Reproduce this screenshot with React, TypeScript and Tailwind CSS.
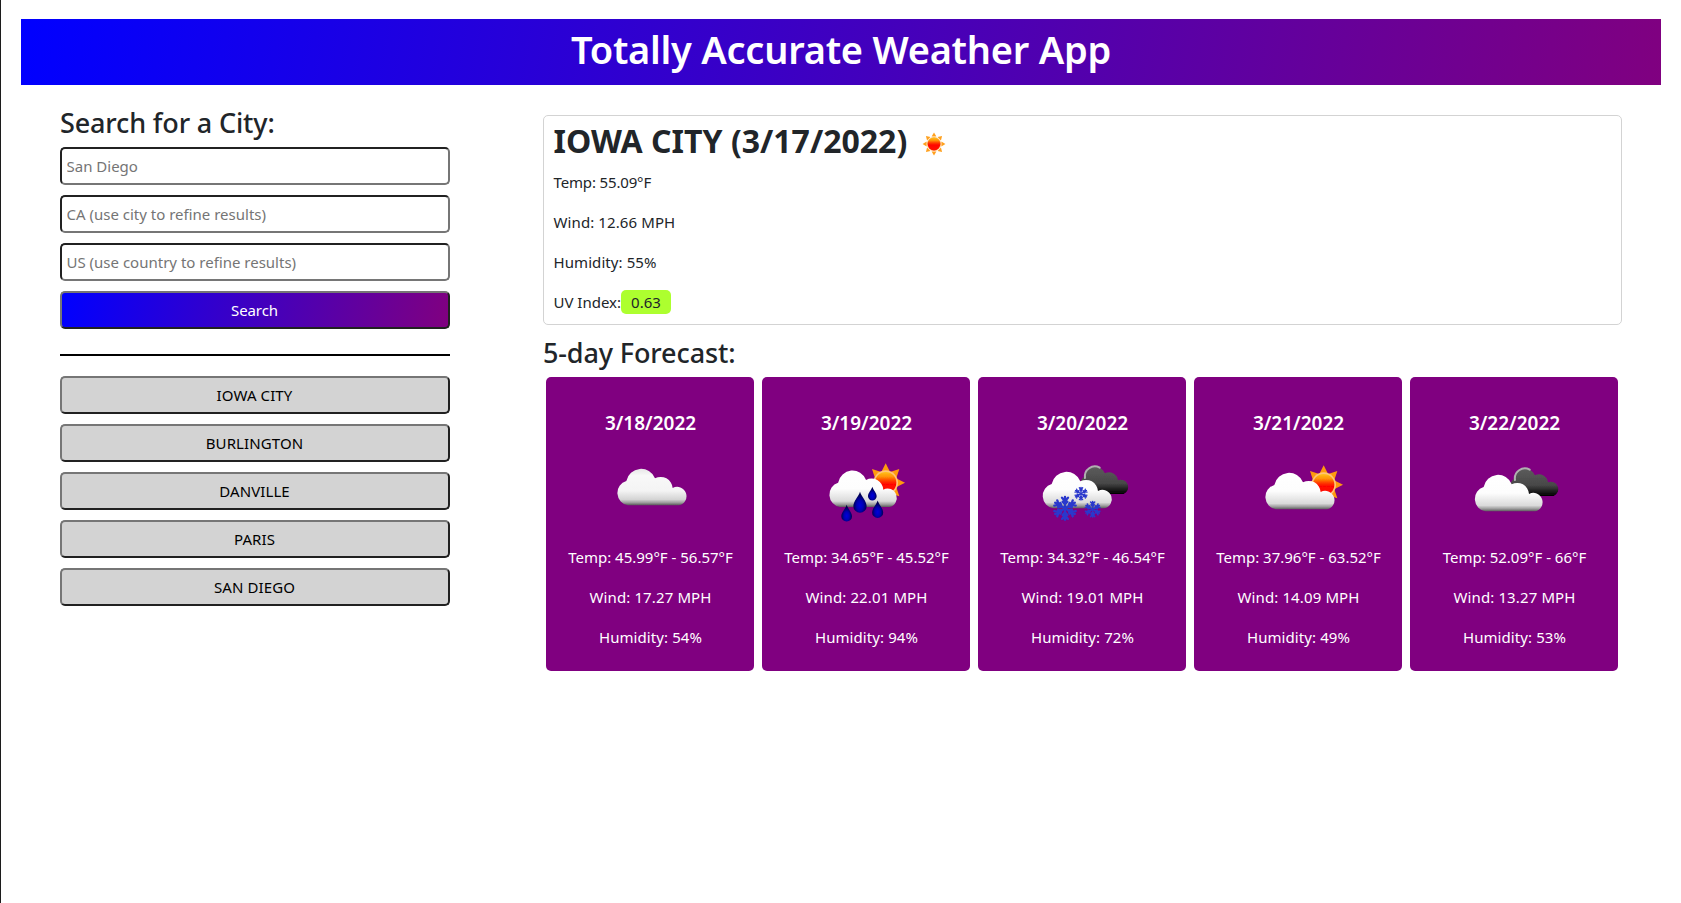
type Sky = "cloudy" | "sunRain" | "snow" | "partlySunny" | "overcast";

interface Day {
  date: string;
  sky: Sky;
  temp: string;
  wind: string;
  humidity: string;
}

const days: Day[] = [
  { date: "3/18/2022", sky: "cloudy", temp: "45.99°F - 56.57°F", wind: "17.27", humidity: "54" },
  { date: "3/19/2022", sky: "sunRain", temp: "34.65°F - 45.52°F", wind: "22.01", humidity: "94" },
  { date: "3/20/2022", sky: "snow", temp: "34.32°F - 46.54°F", wind: "19.01", humidity: "72" },
  { date: "3/21/2022", sky: "partlySunny", temp: "37.96°F - 63.52°F", wind: "14.09", humidity: "49" },
  { date: "3/22/2022", sky: "overcast", temp: "52.09°F - 66°F", wind: "13.27", humidity: "53" },
];

const history = ["IOWA CITY", "BURLINGTON", "DANVILLE", "PARIS", "SAN DIEGO"];

const placeholders = ["San Diego", "CA (use city to refine results)", "US (use country to refine results)"];

const rayAngles = [0, 45, 90, 135, 180, 225, 270, 315];

/* Shared gradients, defined once and referenced by every icon. */
function IconDefs() {
  return (
    <svg width="0" height="0" className="absolute" aria-hidden="true">
      <defs>
        <linearGradient id="cloudFill" x1="0" y1="0" x2="0" y2="1">
          <stop offset="0" stopColor="#e6e6e6" />
          <stop offset="0.18" stopColor="#f8f8f8" />
          <stop offset="0.6" stopColor="#f4f4f4" />
          <stop offset="0.84" stopColor="#d4d4d4" />
          <stop offset="0.93" stopColor="#9a9a9a" />
          <stop offset="1" stopColor="#555555" />
        </linearGradient>
        <linearGradient id="frontFill" x1="0" y1="0" x2="0" y2="1">
          <stop offset="0" stopColor="#ffffff" />
          <stop offset="0.5" stopColor="#fdfdfd" />
          <stop offset="0.84" stopColor="#dadada" />
          <stop offset="0.93" stopColor="#9c9c9c" />
          <stop offset="1" stopColor="#5a5a5a" />
        </linearGradient>
        <linearGradient id="darkFill" x1="0" y1="0" x2="0" y2="1">
          <stop offset="0" stopColor="#5c5c5c" />
          <stop offset="0.6" stopColor="#484848" />
          <stop offset="0.85" stopColor="#181818" />
          <stop offset="1" stopColor="#000000" />
        </linearGradient>
        <linearGradient id="sunFill" x1="0" y1="0" x2="0" y2="1">
          <stop offset="0" stopColor="#ffc21a" />
          <stop offset="0.22" stopColor="#ff9408" />
          <stop offset="0.42" stopColor="#ff3a00" />
          <stop offset="0.58" stopColor="#ff0600" />
          <stop offset="1" stopColor="#ff1000" />
        </linearGradient>
        <radialGradient id="dropFill" cx="0.5" cy="0.66" r="0.5">
          <stop offset="0" stopColor="#0000dc" />
          <stop offset="0.5" stopColor="#0000b4" />
          <stop offset="1" stopColor="#000050" />
        </radialGradient>
        <filter id="soft" x="-10%" y="-10%" width="120%" height="120%">
          <feGaussianBlur stdDeviation="1.8" />
        </filter>
      </defs>
    </svg>
  );
}

function Sun({ x, y }: { x: number; y: number }) {
  return (
    <g transform={`translate(${x} ${y})`}>
      {rayAngles.map((a) => (
        <path key={a} d="M-12 -34L0 -58L12 -34Z" fill="#ff9a10" transform={`rotate(${a})`} />
      ))}
      <circle r="37" fill="#ffc478" />
      <circle r="32" fill="url(#sunFill)" />
    </g>
  );
}

const cloudPath =
  "M112 166A37.500 37.500 0 0 1 107 93A45 45 0 0 1 193 85A36 36 0 0 1 246 114A28 28 0 1 1 265 166Z";

function FrontCloud({ transform }: { transform: string }) {
  return <path d={cloudPath} fill="url(#frontFill)" transform={transform} />;
}

function DarkCloud({ y }: { y: number }) {
  return (
    <g transform={`translate(0 ${y})`}>
      <path
        d="M195 132A30 30 0 0 1 179 78A32 32 0 0 1 240 70A27 27 0 0 1 279 91A21 21 0 1 1 296 132Z"
        fill="url(#darkFill)"
      />
      <path d="M180 84A30 30 0 0 1 224 53" fill="none" stroke="#b0b0b0" strokeWidth="6" strokeLinecap="round" />
    </g>
  );
}

function Drop({ x, y, s }: { x: number; y: number; s: number }) {
  return (
    <path
      d="M0 -32C5 -16 20 -4 20 12A20 19 0 0 1 -20 12C-20 -4 -5 -16 0 -32Z"
      fill="url(#dropFill)"
      transform={`translate(${x} ${y}) scale(${s})`}
    />
  );
}

function Flake({ x, y, s }: { x: number; y: number; s: number }) {
  return (
    <g
      transform={`translate(${x} ${y}) scale(${s})`}
      fill="none"
      stroke="#2a38cc"
      strokeWidth="7"
      strokeLinecap="round"
    >
      {[0, 60, 120, 180, 240, 300].map((a) => (
        <path key={a} d="M0 0V-34M-9 -32L0 -22L9 -32M-7 -20L0 -12L7 -20" transform={`rotate(${a})`} />
      ))}
    </g>
  );
}

function WeatherIcon({ sky }: { sky: Sky }) {
  const box: Record<Sky, string> = {
    cloudy: "0 0 360 270",
    sunRain: "-12 0 360 270",
    snow: "-9 0 360 270",
    partlySunny: "-21 0 360 270",
    overcast: "-3 0 360 270",
  };
  return (
    <svg viewBox={box[sky]} className="mx-auto mt-[15px] block h-[90px] w-[120px]">
      <g filter="url(#soft)">
        {sky === "cloudy" && <path d={cloudPath} fill="url(#cloudFill)" transform="translate(2 0)" />}
        {sky === "sunRain" && (
          <>
            <Sun x={227} y={98} />
            <FrontCloud transform="translate(-20 5) scale(.975 1)" />
            <Drop x={150} y={157} s={1} />
            <Drop x={110} y={190} s={0.8} />
            <Drop x={187} y={131} s={0.65} />
            <Drop x={203} y={178} s={0.83} />
          </>
        )}
        {sky === "snow" && (
          <>
            <DarkCloud y={0} />
            <FrontCloud transform="translate(-27 9)" />
            <Flake x={120} y={175} s={1} />
            <Flake x={168} y={131} s={0.56} />
            <Flake x={203} y={178} s={0.68} />
          </>
        )}
        {sky === "partlySunny" && (
          <>
            <Sun x={236} y={104} />
            <FrontCloud transform="translate(-19 12)" />
          </>
        )}
        {sky === "overcast" && (
          <>
            <DarkCloud y={6} />
            <FrontCloud transform="translate(-19 18) scale(.98 1)" />
          </>
        )}
      </g>
    </svg>
  );
}

const raised =
  "h-[38px] w-full rounded-[5px] border-2 border-t-[#767676] border-l-[#767676] border-r-[#212121] border-b-[#212121] text-center leading-6";

export default function App() {
  return (
    <div className="h-[903px] overflow-hidden border-l border-[#1c1c1c] bg-white px-5 pt-[19px] font-['Noto_Sans',sans-serif] text-[15px] leading-6 text-[#212529]">
      <IconDefs />
      <header className="h-[66px] bg-[linear-gradient(100deg,#0000ff,#800080)] pt-[6px] text-center">
        <h1 className="text-[38px] leading-[48px] font-semibold tracking-[-0.25px] text-white">
          Totally Accurate Weather App
        </h1>
      </header>

      <div className="flex items-start pl-[39px]">
        <aside className="w-[390px] shrink-0 pt-[21px]">
          <h2 className="h-[41px] text-[27px] leading-[34px] font-medium tracking-[-0.15px]">Search for a City:</h2>
          <form className="flex flex-col gap-[10px]">
            {placeholders.map((p) => (
              <input
                key={p}
                type="text"
                placeholder={p}
                className="h-[38px] w-full rounded-[5px] border-2 border-t-[#212121] border-r-[#767676] border-b-[#767676] border-l-[#212121] bg-white px-[4.5px] placeholder:text-[#757575]"
              />
            ))}
            <button
              type="button"
              className={`${raised} bg-[linear-gradient(100deg,#0000ff,#800080)] pr-px tracking-[-0.1px] text-white`}
            >
              Search
            </button>
          </form>
          <hr className="mt-[25px] mb-5 h-[2px] border-0 bg-black" />
          <div className="flex flex-col gap-[10px]">
            {history.map((c) => (
              <button key={c} type="button" className={`${raised} bg-[#d3d3d3] pr-px tracking-[0.1px] text-black`}>
                {c}
              </button>
            ))}
          </div>
        </aside>

        <main className="ml-[93px] w-[1079px] shrink-0 pt-[30px]">
          <section className="h-[210px] rounded-[5px] border border-[#d3d3d3] px-[9.5px] pt-[6px]">
            <div className="flex h-[48px] items-start">
              <h2 className="text-[32px] leading-[38px] font-bold">IOWA CITY (3/17/2022)</h2>
              <svg viewBox="-60 -60 120 120" className="mt-[10px] ml-[14.5px] h-6 w-6">
                {rayAngles.map((a) => (
                  <path key={a} d="M-12 -37L0 -57L12 -37Z" fill="#ffa01e" transform={`rotate(${a})`} />
                ))}
                <circle r="35" fill="#ffc070" />
                <circle r="32" fill="url(#sunFill)" />
              </svg>
            </div>
            <div className="flex flex-col gap-4">
              <p className="tracking-[-0.15px]">Temp: 55.09°F</p>
              <p className="tracking-[0.1px]">Wind: 12.66 MPH</p>
              <p className="tracking-[0.08px]">Humidity: 55%</p>
              <p className="flex whitespace-nowrap">
                <span className="w-[67.5px]">UV Index:</span>
                <span className="w-[50px] rounded-[5px] bg-[#adff2f] text-center">0.63</span>
              </p>
            </div>
          </section>

          <h2 className="mt-[11px] h-[41px] text-[27px] leading-[34px] font-medium tracking-[-0.12px]">
            5-day Forecast:
          </h2>
          <div className="grid grid-cols-[repeat(5,208px)] gap-2 pl-[3px]">
            {days.map((d) => (
              <article key={d.date} className="h-[294px] rounded-[5px] bg-[#800080] pt-[34px] text-center text-white">
                <h3 className="pl-px text-[19px] leading-6 font-semibold">{d.date}</h3>
                <WeatherIcon sky={d.sky} />
                <div className="mt-[5px] flex flex-col gap-4 pl-px">
                  <p>Temp: {d.temp}</p>
                  <p className="tracking-[0.12px]">Wind: {d.wind} MPH</p>
                  <p className="tracking-[0.08px]">Humidity: {d.humidity}%</p>
                </div>
              </article>
            ))}
          </div>
        </main>
      </div>
    </div>
  );
}
